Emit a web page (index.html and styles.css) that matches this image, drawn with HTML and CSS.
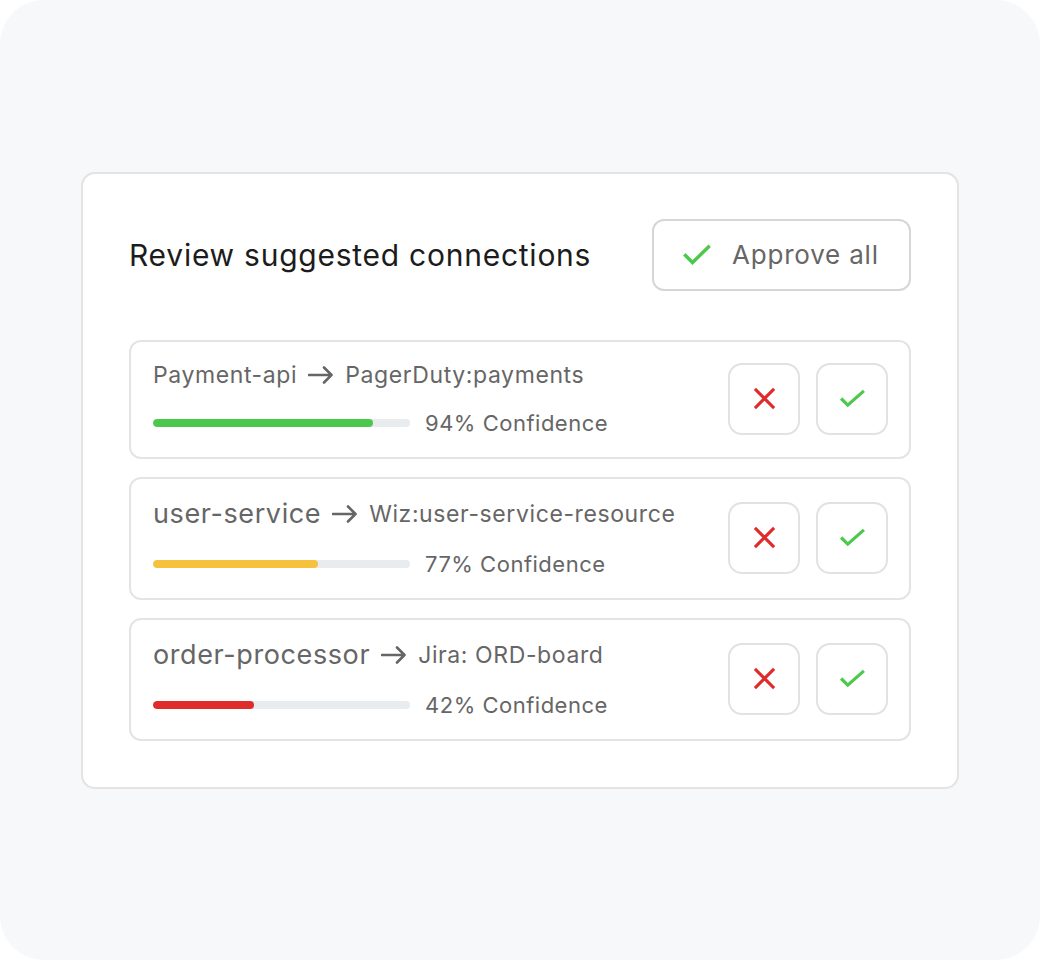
FILE: index.html
```html
<!DOCTYPE html>
<html lang="en">
<head>
<meta charset="utf-8">
<title>Review suggested connections</title>
<link rel="stylesheet" href="styles.css">
</head>
<body>
<div class="frame">
  <section class="card">
    <header class="card-header">
      <h1 class="title">Review suggested connections</h1>
      <button class="approve-all" type="button">
        <svg class="icon-check-lg" viewBox="0 0 28 22" aria-hidden="true"><path d="M2.5 11.5 L9.5 18.5 L25.5 3" /></svg>
        <span>Approve all</span>
      </button>
    </header>
    <div class="list">
      <div class="row">
        <div class="info">
          <div class="pair compact">
            <span class="src small">Payment-api</span>
            <svg class="arrow" viewBox="0 0 26 18" aria-hidden="true"><path d="M1 9 H23.5 M16 1.5 L23.5 9 L16 16.5" /></svg>
            <span class="dst">PagerDuty:payments</span>
          </div>
          <div class="conf">
            <div class="bar"><div class="fill green" style="width:220px"></div></div>
            <span class="conf-text">94% Confidence</span>
          </div>
        </div>
        <div class="actions">
          <button class="act" type="button" aria-label="Reject"><svg class="icon-x" viewBox="0 0 24 24"><path d="M2 2 L22 22 M22 2 L2 22" /></svg></button>
          <button class="act" type="button" aria-label="Approve"><svg class="icon-check" viewBox="0 0 28 20"><path d="M2 10 L9 17 L26 2" /></svg></button>
        </div>
      </div>
      <div class="row">
        <div class="info">
          <div class="pair">
            <span class="src">user-service</span>
            <svg class="arrow" viewBox="0 0 26 18" aria-hidden="true"><path d="M1 9 H23.5 M16 1.5 L23.5 9 L16 16.5" /></svg>
            <span class="dst">Wiz:user-service-resource</span>
          </div>
          <div class="conf">
            <div class="bar"><div class="fill yellow" style="width:165px"></div></div>
            <span class="conf-text">77% Confidence</span>
          </div>
        </div>
        <div class="actions">
          <button class="act" type="button" aria-label="Reject"><svg class="icon-x" viewBox="0 0 24 24"><path d="M2 2 L22 22 M22 2 L2 22" /></svg></button>
          <button class="act" type="button" aria-label="Approve"><svg class="icon-check" viewBox="0 0 28 20"><path d="M2 10 L9 17 L26 2" /></svg></button>
        </div>
      </div>
      <div class="row">
        <div class="info">
          <div class="pair">
            <span class="src">order-processor</span>
            <svg class="arrow" viewBox="0 0 26 18" aria-hidden="true"><path d="M1 9 H23.5 M16 1.5 L23.5 9 L16 16.5" /></svg>
            <span class="dst">Jira: ORD-board</span>
          </div>
          <div class="conf">
            <div class="bar"><div class="fill red" style="width:101px"></div></div>
            <span class="conf-text">42% Confidence</span>
          </div>
        </div>
        <div class="actions">
          <button class="act" type="button" aria-label="Reject"><svg class="icon-x" viewBox="0 0 24 24"><path d="M2 2 L22 22 M22 2 L2 22" /></svg></button>
          <button class="act" type="button" aria-label="Approve"><svg class="icon-check" viewBox="0 0 28 20"><path d="M2 10 L9 17 L26 2" /></svg></button>
        </div>
      </div>
    </div>
  </section>
</div>
</body>
</html>
```

FILE: styles.css
```css
* { box-sizing: border-box; }
html, body { margin: 0; padding: 0; background: #ffffff; }
body { font-family: Inter, "Noto Sans", "Liberation Sans", sans-serif; }

.frame {
  width: 1040px;
  height: 960px;
  border-radius: 44px;
  background: #f7f8fa;
  display: flex;
  align-items: center;
  justify-content: center;
}

.card {
  width: 878px;
  background: #ffffff;
  border: 2px solid #e3e3e3;
  border-radius: 14px;
  padding: 45px 46px 46px;
}

.card-header {
  display: flex;
  align-items: center;
  justify-content: space-between;
  height: 72px;
  margin-bottom: 49px;
}

.title {
  margin: 0;
  font-size: 30px;
  font-weight: 400;
  color: #1c1c1c;
  letter-spacing: 0.75px;
}

.approve-all {
  display: flex;
  align-items: center;
  gap: 21px;
  height: 72px;
  width: 259px;
  padding: 0 0 0 29px;
  background: #fff;
  border: 2px solid #d6d6d6;
  border-radius: 12px;
  font-family: inherit;
  font-size: 26px;
  letter-spacing: 0.8px;
  color: #666666;
}

.icon-check-lg { width: 28px; height: 22px; fill: none; stroke: #4cc94c; stroke-width: 3.4; stroke-linecap: square; }

.list { display: flex; flex-direction: column; gap: 18px; }

.row {
  display: flex;
  align-items: center;
  justify-content: space-between;
  border: 2px solid #e4e4e4;
  border-radius: 12px;
  padding: 19px 21px 20px 22px;
}

.info { display: flex; flex-direction: column; gap: 20px; }

.pair { display: flex; align-items: center; height: 32px; color: #666666; line-height: 32px; }
.pair.compact { height: 28px; line-height: 28px; }
.src { font-size: 27px; letter-spacing: 0.6px; }
.src.small { font-size: 23px; }
.dst { font-size: 23px; letter-spacing: 0.6px; }
.arrow { width: 26px; height: 18px; margin: 0 11px 0 11px; fill: none; stroke: #666; stroke-width: 2.6; stroke-linecap: round; stroke-linejoin: round; }

.conf { display: flex; align-items: center; gap: 15px; height: 28px; line-height: 28px; }
.bar { width: 257px; height: 8px; border-radius: 4px; background: #e8ecef; overflow: hidden; }
.fill { height: 100%; border-radius: 4px; }
.fill.green { background: #4cc94c; }
.fill.yellow { background: #f6c23e; }
.fill.red { background: #e02b2b; }
.conf-text { font-size: 22px; letter-spacing: 0.5px; color: #666666; }

.actions { display: flex; gap: 16px; }
.act {
  width: 72px;
  height: 72px;
  display: flex;
  align-items: center;
  justify-content: center;
  background: #fff;
  border: 2px solid #e2e2e2;
  border-radius: 14px;
  padding: 0;
}
.icon-x { width: 23px; height: 23px; fill: none; stroke: #e02b2b; stroke-width: 3.2; }
.icon-check { width: 27px; height: 19px; fill: none; stroke: #4cc94c; stroke-width: 3.4; }
```
